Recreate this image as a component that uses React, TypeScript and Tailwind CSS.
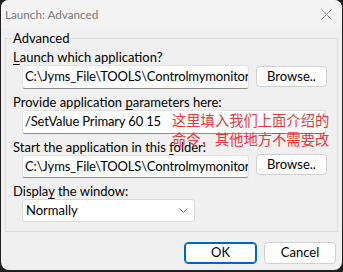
import React from "react";

const font = { fontFamily: 'Lato, "Noto Sans", "Noto Sans CJK SC", sans-serif' };

function Input({ value, w, h = "h-[24px]" }: { value: string; w: string; h?: string }) {
  return (
    <div
      className={`${h} ${w} shrink-0 bg-white border border-[#e2e2e2] border-b-[#8c8c8c] rounded-[3px] overflow-hidden whitespace-nowrap pl-[2px] text-[13px] tracking-[-0.15px] text-black flex items-center`}
    >
      {value}
    </div>
  );
}

function Btn({ children, primary }: { children: React.ReactNode; primary?: boolean }) {
  return (
    <div
      className={`h-[22px] flex items-center justify-center rounded-[4px] bg-[#fdfdfd] text-[13px] text-black ${
        primary ? "w-[73px] border border-[#0067c0] shadow-[inset_0_0_0_1px_#0067c0]" : "w-[72px] border border-[#d0d0d0]"
      }`}
    >
      {children}
    </div>
  );
}

function Label({ children }: { children: React.ReactNode }) {
  return <div className="h-[21px] pt-[5px] leading-[16px] pl-[7px] whitespace-nowrap">{children}</div>;
}

const U = ({ children }: { children: React.ReactNode }) => (
  <span className="underline decoration-1 underline-offset-[2px]">{children}</span>
);

export default function App() {
  return (
    <div className="w-[343px] h-[272px] bg-[#1f1f1f] pl-[1px] pr-[1px] pb-[2px]" style={font}>
      <div className="w-full h-full bg-[#f0f0f0] rounded-[8px] overflow-hidden flex flex-col relative">
        {/* title bar */}
        <div className="h-[28px] shrink-0 bg-[#f3f3f3] flex items-start justify-between pl-[4px] pr-[10px] pt-[6px]">
          <span className="text-[11.7px] leading-[16px] text-[#7a7a7a]">Launch: Advanced</span>
          <svg width="11" height="11" viewBox="0 0 11 11" className="mt-[3px]">
            <path d="M0.5 0.5 L10.5 10.5 M10.5 0.5 L0.5 10.5" stroke="#8a8a8a" strokeWidth="1" />
          </svg>
        </div>
        {/* group */}
        <div className="mx-[4px] mt-[10px] border border-[#dcdcdc] pb-[9px] text-[13px] text-black">
          <div className="h-[14px] -mt-[9px] pl-[6px] flex">
            <span className="bg-[#f0f0f0] px-[1px] leading-[16px]">Advanced</span>
          </div>
          <Label>
            <U>L</U>aunch which application?
          </Label>
          <div className="flex items-start gap-[7px] pl-[16px]">
            <Input value="C:\Jyms_File\TOOLS\Controlmymonitor" w="w-[227px]" />
            <div className="mt-[1px] h-[21px] w-[71px] flex items-center justify-center rounded-[4px] bg-[#fdfdfd] border border-[#d0d0d0]">
              Browse..
            </div>
          </div>
          <Label>
            Provide application <U>p</U>arameters here:
          </Label>
          <div className="pl-[16px]">
            <Input value="/SetValue Primary 60 15" w="w-[304px]" />
          </div>
          <Label>
            Start the application in this <U>f</U>older:
          </Label>
          <div className="flex items-start gap-[7px] pl-[16px]">
            <Input value="C:\Jyms_File\TOOLS\Controlmymonitor" w="w-[227px]" h="h-[23px]" />
            <div className="-mt-[1px] h-[21px] w-[71px] flex items-center justify-center rounded-[4px] bg-[#fdfdfd] border border-[#d0d0d0]">
              Browse..
            </div>
          </div>
          <Label>
            Displa<U>y</U> the window:
          </Label>
          <div className="pl-[16px]">
            <div className="h-[23px] w-[173px] bg-white border border-[#dadada] rounded-[3px] flex items-center justify-between pl-[3px] pr-[6px]">
              <span>Normally</span>
              <svg width="9" height="5" viewBox="0 0 9 5">
                <path d="M0.5 0.5 L4.5 4.5 L8.5 0.5" fill="none" stroke="#606060" strokeWidth="1" />
              </svg>
            </div>
          </div>
        </div>
        {/* buttons */}
        <div className="flex justify-end gap-[7px] pr-[6px] mt-[10px]">
          <Btn primary>OK</Btn>
          <Btn>Cancel</Btn>
        </div>
        {/* annotation */}
        <div
          className="absolute left-[171px] top-[110px] text-[14.3px] leading-[19px] text-[#e8383d] whitespace-nowrap"
          style={{ fontFamily: '"Noto Sans CJK SC", sans-serif' }}
        >
          <div>这里填入我们上面介绍的</div>
          <div>命令，其他地方不需要改</div>
        </div>
      </div>
    </div>
  );
}
